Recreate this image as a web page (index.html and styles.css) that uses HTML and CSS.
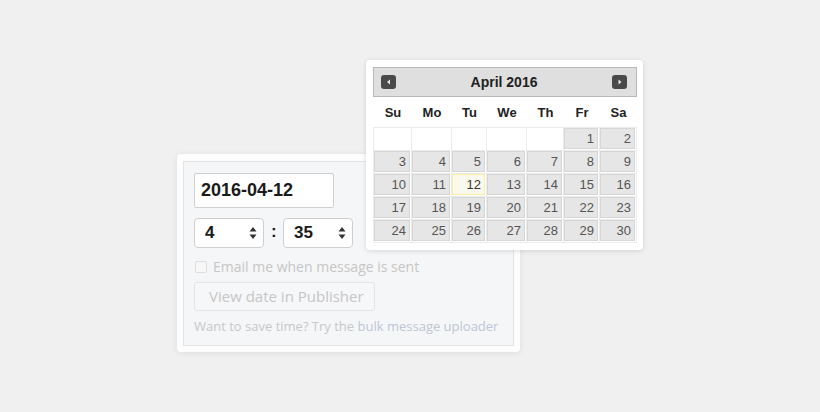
FILE: index.html
```html
<!DOCTYPE html>
<html>
<head>
<meta charset="utf-8">
<link rel="stylesheet" href="styles.css">
</head>
<body>
<div class="stage">
  <div class="card">
    <div class="panel">
      <div class="date-input">2016-04-12</div>
      <div class="time-row">
        <div class="select"><span>4</span><svg class="arrows" width="8" height="13" viewBox="0 0 8 13"><path d="M4 0 L7.5 4.5 L0.5 4.5 Z M0.5 7.5 L7.5 7.5 L4 12 Z" fill="#333"/></svg></div>
        <span class="colon">:</span>
        <div class="select"><span>35</span><svg class="arrows" width="8" height="13" viewBox="0 0 8 13"><path d="M4 0 L7.5 4.5 L0.5 4.5 Z M0.5 7.5 L7.5 7.5 L4 12 Z" fill="#333"/></svg></div>
      </div>
      <label class="check-row"><span class="checkbox"></span><span>Email me when message is sent</span></label>
      <div class="btn">View date in Publisher</div>
      <p class="hint">Want to save time? Try the <span class="link">bulk message uploader</span></p>
    </div>
  </div>

  <div class="calendar">
    <div class="cal-head">
      <svg class="nav" width="15" height="14" viewBox="0 0 15 14"><rect width="15" height="14" rx="3" fill="#4a4a4a"/><path d="M6 7 L9 4.5 L9 9.5 Z" fill="#e8e8e8"/></svg>
      <span class="cal-title">April 2016</span>
      <svg class="nav" width="15" height="14" viewBox="0 0 15 14"><rect width="15" height="14" rx="3" fill="#4a4a4a"/><path d="M9.5 7 L6.5 4.5 L6.5 9.5 Z" fill="#e8e8e8"/></svg>
    </div>
    <div class="dow">
      <span>Su</span><span>Mo</span><span>Tu</span><span>We</span><span>Th</span><span>Fr</span><span>Sa</span>
    </div>
    <div class="days">
      <div class="cell empty"></div><div class="cell empty"></div><div class="cell empty"></div><div class="cell empty"></div><div class="cell empty"></div><div class="cell"><a>1</a></div><div class="cell"><a>2</a></div>
      <div class="cell"><a>3</a></div><div class="cell"><a>4</a></div><div class="cell"><a>5</a></div><div class="cell"><a>6</a></div><div class="cell"><a>7</a></div><div class="cell"><a>8</a></div><div class="cell"><a>9</a></div>
      <div class="cell"><a>10</a></div><div class="cell"><a>11</a></div><div class="cell"><a class="today">12</a></div><div class="cell"><a>13</a></div><div class="cell"><a>14</a></div><div class="cell"><a>15</a></div><div class="cell"><a>16</a></div>
      <div class="cell"><a>17</a></div><div class="cell"><a>18</a></div><div class="cell"><a>19</a></div><div class="cell"><a>20</a></div><div class="cell"><a>21</a></div><div class="cell"><a>22</a></div><div class="cell"><a>23</a></div>
      <div class="cell"><a>24</a></div><div class="cell"><a>25</a></div><div class="cell"><a>26</a></div><div class="cell"><a>27</a></div><div class="cell"><a>28</a></div><div class="cell"><a>29</a></div><div class="cell"><a>30</a></div>
    </div>
  </div>
</div>
</body>
</html>
```

FILE: styles.css
```css
html, body {
  margin: 0;
  padding: 0;
}
body {
  background: #f0f0f0;
  width: 820px;
  height: 412px;
  overflow: hidden;
  font-family: "Liberation Sans", Arial, sans-serif;
}
.stage {
  position: relative;
  padding: 154px 0 0 177px;
}
.card {
  width: 331px;
  padding: 7px 6px 6px 6px;
  background: #fdfdfd;
  border-radius: 4px;
  box-shadow: 0 1px 6px rgba(0, 0, 0, 0.08);
}
.panel {
  background: #f5f6f7;
  border: 1px solid #e3e3e3;
  padding: 11px 10px 10px 10px;
  height: 162px;
}
.date-input {
  box-sizing: border-box;
  width: 140px;
  height: 35px;
  background: #fff;
  border: 1px solid #cfcfcf;
  border-radius: 2px;
  padding-left: 6px;
  font-weight: bold;
  font-size: 18px;
  line-height: 33px;
  color: #1a1a1a;
}
.time-row {
  display: flex;
  align-items: center;
  gap: 7px;
  margin-top: 10px;
}
.select {
  box-sizing: border-box;
  width: 70px;
  height: 30px;
  background: #fff;
  border: 1px solid #cfcfcf;
  border-radius: 4px;
  display: flex;
  align-items: center;
  justify-content: space-between;
  padding: 0 6px 0 10px;
  font-weight: bold;
  font-size: 17px;
  color: #1a1a1a;
}
.arrows {
  display: block;
}
.colon {
  font-weight: bold;
  font-size: 17px;
  color: #1a1a1a;
  width: 5px;
  margin-top: -2px;
}
.check-row {
  display: flex;
  align-items: center;
  gap: 6px;
  margin-top: 11px;
  padding-left: 1px;
  font-family: "Open Sans", sans-serif;
  font-size: 14px;
  color: #c6c6c6;
  height: 15px;
}
.checkbox {
  box-sizing: border-box;
  width: 12px;
  height: 12px;
  border: 1px solid #dedede;
  border-radius: 2px;
  background: #f7f7f7;
}
.btn {
  box-sizing: border-box;
  width: 181px;
  height: 29px;
  margin-top: 8px;
  border: 1px solid #e4e4e4;
  border-radius: 3px;
  background: #f6f7f8;
  font-family: "Open Sans", sans-serif;
  font-size: 15px;
  line-height: 27px;
  color: #c6c6c6;
  padding-left: 14px;
}
.hint {
  margin: 6px 0 0 0;
  font-family: "Open Sans", sans-serif;
  font-size: 13px;
  line-height: 18px;
  color: #c8c8c8;
}
.link {
  color: #bcc6d8;
}
.calendar {
  position: absolute;
  left: 366px;
  top: 60px;
  width: 264px;
  padding: 7px 6px 7px 7px;
  background: #fff;
  border-radius: 4px;
  box-shadow: 0 1px 5px rgba(0, 0, 0, 0.13);
}
.cal-head {
  box-sizing: border-box;
  height: 30px;
  background: #dfdfdf;
  border: 1px solid #b8b8b8;
  display: flex;
  align-items: center;
  justify-content: space-between;
  padding: 0 9px 0 7px;
}
.cal-title {
  font-weight: bold;
  font-size: 14px;
  color: #222;
}
.nav {
  display: block;
}
.dow, .days {
  display: grid;
  grid-template-columns: 38px 40px 35px 40px 37px 36px 37px;
}
.dow {
  height: 30px;
  align-items: center;
  padding-left: 1px;
}
.dow span {
  text-align: center;
  font-weight: bold;
  font-size: 13px;
  color: #222;
}
.days {
  border-left: 1px solid #ececec;
  border-top: 1px solid #ececec;
  grid-auto-rows: 23px;
}
.cell {
  border-right: 1px solid #ececec;
  border-bottom: 1px solid #ececec;
  padding: 0 1px 1px 0;
  display: flex;
}
.cell.empty {
  background: #fff;
}
.cell a {
  flex: 1;
  box-sizing: border-box;
  background: #e6e6e6;
  border: 1px solid #d6d6d6;
  text-align: right;
  padding-right: 3px;
  font-size: 13px;
  line-height: 20px;
  color: #555;
}
.cell a.today {
  background: #fbf9ee;
  border-color: #fcefa1;
  color: #363636;
}
```
